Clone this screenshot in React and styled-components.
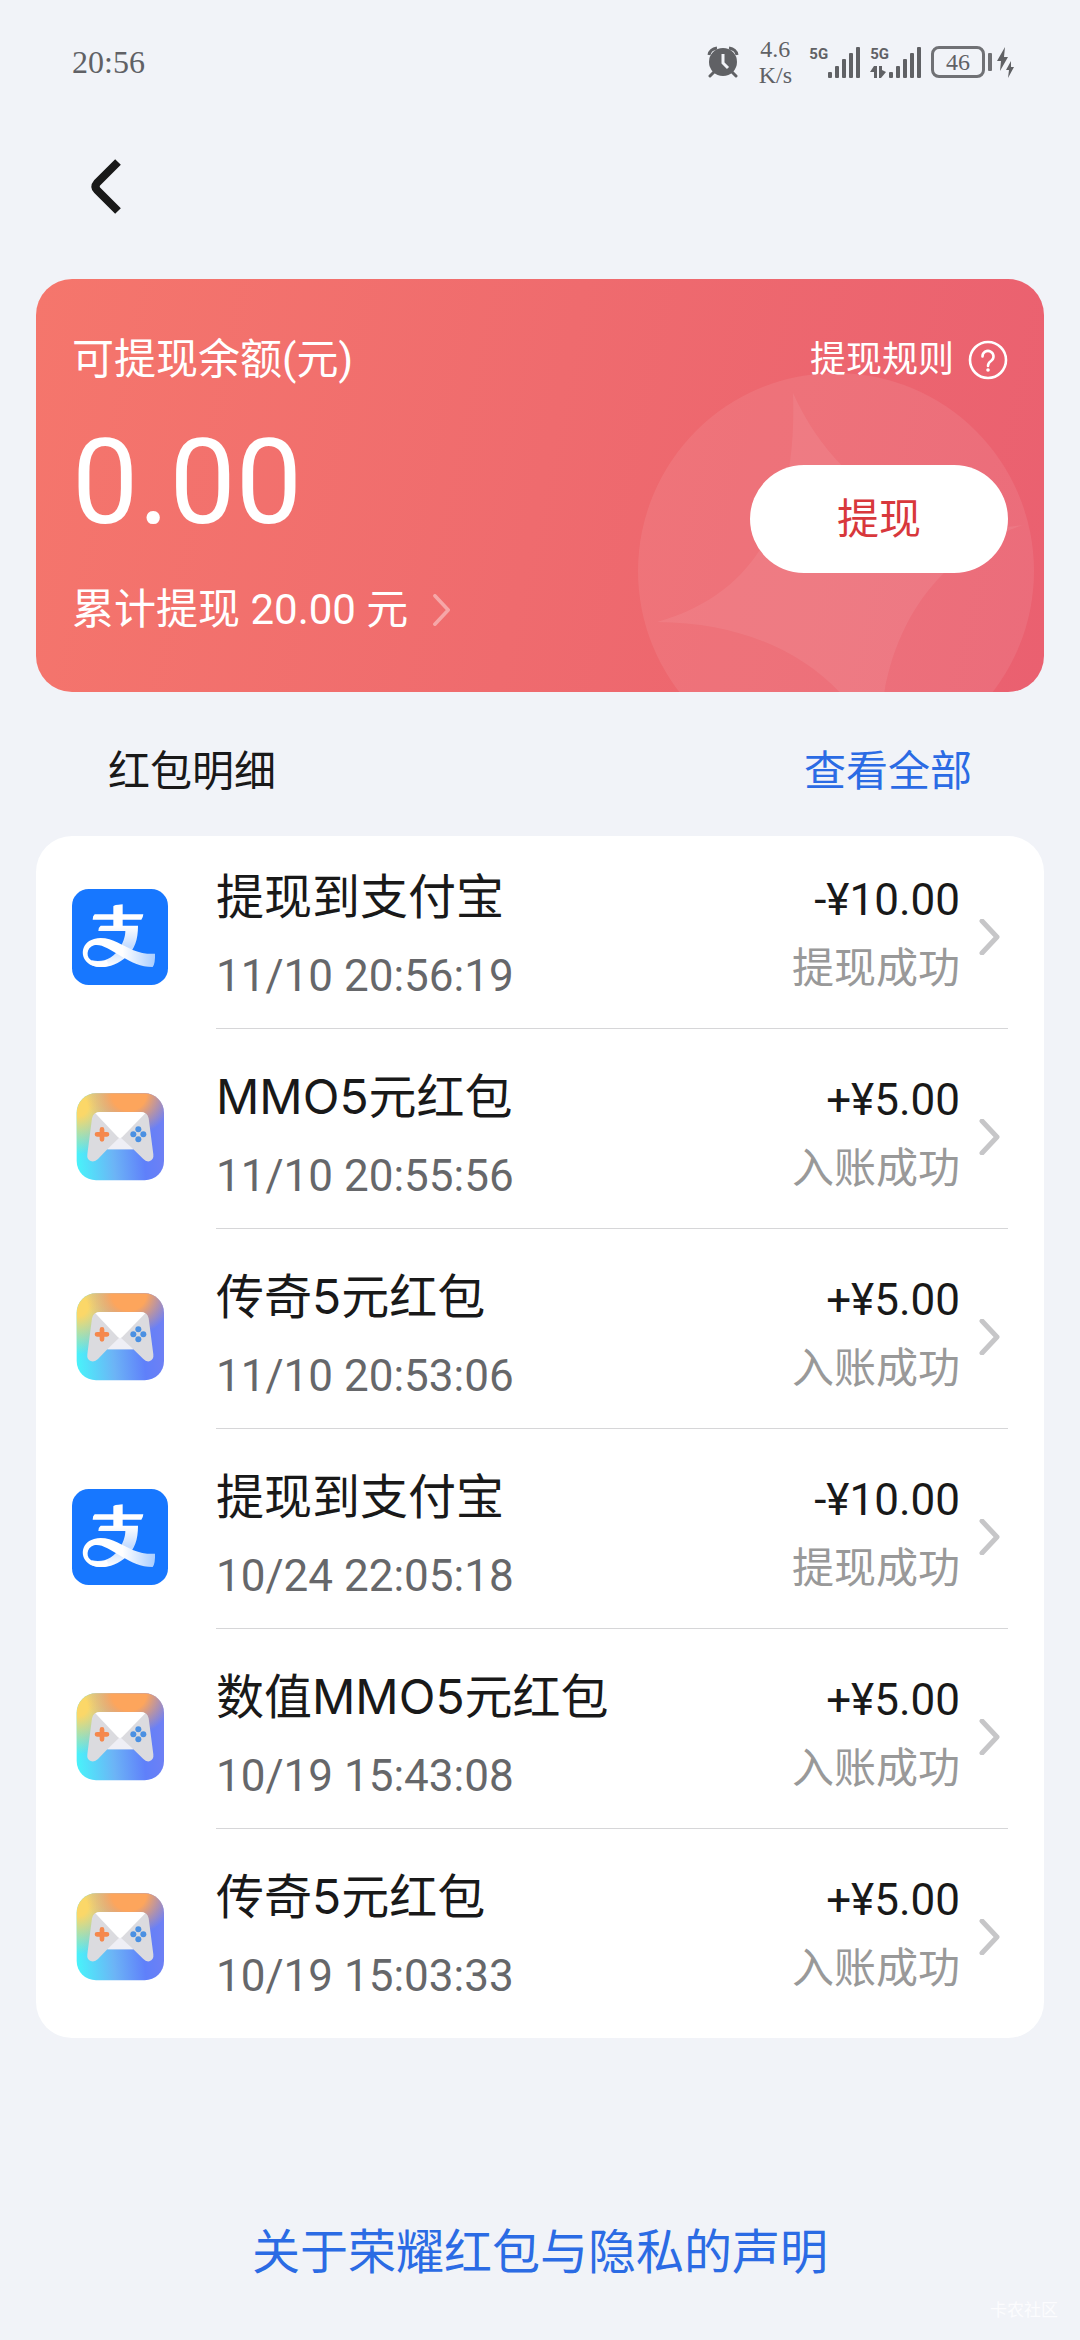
import React from 'react'
import styled, { createGlobalStyle } from 'styled-components'

const GlobalStyle = createGlobalStyle`
  * {
    box-sizing: border-box;
  }
  body {
    margin: 0;
    background-color: #f1f3f8;
    font-family: Roboto, "Noto Sans CJK SC", sans-serif;
    color: #191919;
  }
  svg {
    display: block;
    flex: none;
  }`

const Page = styled.div`
  display: flex;
  flex-direction: column;
  min-height: 100vh;
  position: relative;
  overflow: hidden;`

const StatusBar = styled.div`
  display: flex;
  align-items: center;
  justify-content: space-between;
  height: 124px;
  padding: 0 66px 0 72px;
  color: #606165;
  font-family: "Liberation Serif", serif;`

const Clock = styled.span`
  font-size: 32px;`

const StatusIcons = styled.div`
  display: flex;
  align-items: center;`

const NetSpeed = styled.div`
  width: 40px;
  margin: 0 14px 0 16px;
  font-size: 24px;
  line-height: 26px;
  text-align: center;`

const Signal = styled.div`
  display: flex;
  align-items: flex-end;
  height: 32px;
  margin-right: 10px;`

const SignalLabel = styled.div`
  display: flex;
  flex-direction: column;
  justify-content: space-between;
  height: 32px;
  font: bold 15px/16px Roboto, sans-serif;`

const Battery = styled.div`
  display: flex;
  align-items: center;
  justify-content: center;
  width: 54px;
  height: 32px;
  margin-right: 3px;
  border: 3px solid #707175;
  border-radius: 8px;
  font-size: 24px;
  line-height: 26px;`

const NavBar = styled.nav`
  display: flex;
  align-items: center;
  height: 124px;
  padding: 0 72px;`

const BackButton = styled.button`
  padding: 0;
  border: 0;
  background: none;`

const BalanceCard = styled.section`
  position: relative;
  overflow: hidden;
  margin: 31px 36px 0;
  padding: 51px 36px 52px;
  border-radius: 36px;
  background: linear-gradient(102deg, #f5766c 0%, #ef6b6e 50%, #ea6070 100%);
  color: #fff;`

const Emblem = styled.svg`
  position: absolute;
  right: 9px;
  top: 94px;`

const CardRow = styled.div`
  position: relative;
  display: flex;
  align-items: ${props => props.$top ? 'flex-start' : 'center'};
  justify-content: space-between;
  margin-bottom: ${props => props.$gap || 0}px;`

const CardLabel = styled.h1`
  margin: 0;
  font-size: 42px;
  line-height: 60px;
  font-weight: 400;`

const RulesLink = styled.a`
  display: flex;
  align-items: center;
  gap: 14px;
  color: #fff;
  font-size: 36px;
  line-height: 60px;
  text-decoration: none;`

const Balance = styled.div`
  font-size: 118px;
  line-height: 128px;
  margin-bottom: 33px;`

const TotalLink = styled.a`
  display: flex;
  align-items: center;
  gap: 18px;
  color: #fff;
  font-size: 42px;
  line-height: 60px;
  text-decoration: none;`

const WithdrawButton = styled.button`
  width: 258px;
  height: 108px;
  margin-top: 46px;
  padding: 0 0 8px;
  border: 0;
  border-radius: 54px;
  background-color: #fff;
  color: #d8383c;
  font-family: inherit;
  font-size: 42px;`

const SectionHead = styled.div`
  display: flex;
  justify-content: space-between;
  margin: 50px 108px 34px;
  font-size: 42px;
  line-height: 60px;`

const SectionTitle = styled.h2`
  margin: 0;
  font-size: 42px;
  font-weight: 400;`

const BlueLink = styled.a`
  color: #2b6be4;
  text-decoration: none;`

const List = styled.ul`
  margin: 0 36px;
  padding: 1px 0;
  border-radius: 36px;
  background-color: #fff;
  list-style-type: none;`

const Row = styled.a`
  display: flex;
  gap: 48px;
  padding: 0 36px 8px;
  color: inherit;
  text-decoration: none;`

const RowIcon = styled.div`
  display: flex;
  align-items: center;
  padding-top: 8px;`

const RowBody = styled.div`
  display: flex;
  flex: 1;
  height: 192px;
  border-bottom: 1px solid ${props => props.$last ? 'transparent' : '#d6d6d8'};`

const RowMain = styled.div`
  flex: 1;
  padding-top: 30px;`

const RowTitle = styled.div`
  font-family: Inter, "Noto Sans CJK SC", sans-serif;
  font-size: 48px;
  line-height: 60px;`

const RowTime = styled.div`
  margin-top: 24px;
  color: #66676a;
  font-size: 44px;
  line-height: 50px;`

const RowSide = styled.div`
  margin-right: 12px;
  padding-top: 33px;
  text-align: right;`

const Amount = styled.div`
  font-size: 44px;
  line-height: 60px;`

const Status = styled.div`
  margin-top: 9px;
  color: #999;
  font-size: 42px;
  line-height: 60px;`

const RowArrow = styled.div`
  display: flex;
  align-items: center;
  height: 200px;`

const Footer = styled.footer`
  margin-top: auto;
  padding: 60px 36px 57px;
  font-size: 48px;
  line-height: 60px;
  text-align: center;`

const Watermark = styled.span`
  position: absolute;
  right: 22px;
  bottom: 18px;
  color: #fcfcfe;
  font-size: 17px;
  line-height: 24px;`

const records = [
  { type: 'alipay', title: '提现到支付宝', time: '11/10 20:56:19', amount: '-¥10.00', status: '提现成功' },
  { type: 'game', title: 'MMO5元红包', time: '11/10 20:55:56', amount: '+¥5.00', status: '入账成功' },
  { type: 'game', title: '传奇5元红包', time: '11/10 20:53:06', amount: '+¥5.00', status: '入账成功' },
  { type: 'alipay', title: '提现到支付宝', time: '10/24 22:05:18', amount: '-¥10.00', status: '提现成功' },
  { type: 'game', title: '数值MMO5元红包', time: '10/19 15:43:08', amount: '+¥5.00', status: '入账成功' },
  { type: 'game', title: '传奇5元红包', time: '10/19 15:03:33', amount: '+¥5.00', status: '入账成功' },
]

function AlarmIcon() {
  return (
    <svg width="32" height="32" viewBox="0 0 32 32" fill="none">
      <circle cx="16" cy="16" r="14" fill="#606165" />
      <path d="M2 9Q3 3 10 2M30 9Q29 3 22 2" stroke="#606165" strokeWidth="3" />
      <path d="M7 26L3 30M25 26L29 30" stroke="#606165" strokeWidth="3" strokeLinecap="round" />
      <path d="M16 8V17L21 22" stroke="#f1f3f8" strokeWidth="3" />
    </svg>
  )
}

function SignalBars() {
  return (
    <svg width="32" height="32" viewBox="0 0 32 32" fill="#606165">
      <rect x="0" y="26" width="4" height="6" rx="1" />
      <rect x="7" y="20" width="4" height="12" rx="1" />
      <rect x="14" y="13" width="4" height="19" rx="1" />
      <rect x="21" y="7" width="4" height="25" rx="1" />
      <rect x="28" y="1" width="4" height="31" rx="1" />
    </svg>
  )
}

function DataArrows() {
  return (
    <svg width="16" height="12" viewBox="0 0 16 12" fill="#606165">
      <path d="M4 0H7V12H4V6H0ZM9 0H12V4L16 6L11 12H9Z" />
    </svg>
  )
}

function ChargeIcon() {
  return (
    <svg width="17" height="32" viewBox="0 0 17 32" fill="#606165">
      <path d="M8 1L0 15H4L3 25L11 11H7Z" />
      <path d="M14 15L9 24H12L11 32L17 21H14Z" />
    </svg>
  )
}

function Arrow({ color, width, size }) {
  return (
    <svg width={size} height={size} viewBox="0 0 36 36" fill="none" stroke={color} strokeWidth={width} strokeLinecap="round" strokeLinejoin="round">
      <path d="M10 2L25 18L10 34" />
    </svg>
  )
}

function AlipayIcon() {
  return (
    <svg width="96" height="96" viewBox="0 0 288 288">
      <defs>
        <linearGradient id="tail" x1="0" y1="0" x2="1" y2="0">
          <stop offset="0.55" stopColor="#fff" />
          <stop offset="1" stopColor="#a9cdff" />
        </linearGradient>
        <linearGradient id="fall" x1="0" y1="0" x2="0" y2="1">
          <stop offset="0.35" stopColor="#fff" />
          <stop offset="0.68" stopColor="#c2dbff" />
          <stop offset="1" stopColor="#fff" />
        </linearGradient>
      </defs>
      <rect width="288" height="288" rx="50" fill="#1777ff" />
      <path d="M124 52Q124 48 152 46V76H214Q213 87 208 92H152V110H198C198 152 188 180 166 200C130 236 88 238 62 230L60 214C95 222 126 206 144 176C156 156 160 140 160 126H79Q79 115 86 110H124V92H62Q62 80 68 76H124Z" fill="url(#fall)" />
      <path d="M62 230C22 216 22 162 66 150C110 138 150 170 180 182C205 192 230 196 249 194Q250 224 242 234C205 234 180 220 150 203C110 180 88 164 66 169C42 176 40 208 62 216C76 220 92 219 104 213L110 230Q86 237 62 230Z" fill="url(#tail)" />
    </svg>
  )
}

function GameIcon() {
  return (
    <svg width="96" height="96" viewBox="0 0 288 288">
      <defs>
        <linearGradient id="gameBase" x1="0" y1="0.6" x2="1" y2="0.5">
          <stop offset="0" stopColor="#4af0fa" />
          <stop offset="0.4" stopColor="#6cb4f6" />
          <stop offset="0.75" stopColor="#5f80fa" />
          <stop offset="1" stopColor="#6f80f4" />
        </linearGradient>
        <radialGradient id="gameYellow" cx="0.02" cy="0.15" r="0.55">
          <stop offset="0.2" stopColor="#fbd768" />
          <stop offset="1" stopColor="#fbd768" stopOpacity="0" />
        </radialGradient>
        <radialGradient id="gameOrange" cx="0.6" cy="0" r="0.5">
          <stop offset="0.4" stopColor="#fda55c" />
          <stop offset="1" stopColor="#fda55c" stopOpacity="0" />
        </radialGradient>
      </defs>
      <rect x="14" y="13" width="262" height="261" rx="58" fill="url(#gameBase)" />
      <rect x="14" y="13" width="262" height="261" rx="58" fill="url(#gameYellow)" />
      <rect x="14" y="13" width="262" height="261" rx="58" fill="url(#gameOrange)" />
      <path d="M84 69H206Q226 69 230 88L244 196Q246 212 232 217Q222 219 214 210L184 181H106L78 210Q68 220 56 216Q44 211 46 196L60 88Q64 69 84 69Z" fill="#dbdbdf" />
      <path d="M144 144L184 181H106Z" fill="#efeff5" />
      <path d="M70 73Q76 69 84 69H206Q214 69 220 73L150 145Q144 150 138 145Z" fill="#fff" />
      <path d="M90 121V151M75 136H105" stroke="#f5884c" strokeWidth="14" strokeLinecap="round" />
      <g fill="#4a90e2">
        <circle cx="199" cy="121" r="9" />
        <circle cx="199" cy="151" r="9" />
        <circle cx="184" cy="136" r="9" />
        <circle cx="214" cy="136" r="9" />
      </g>
    </svg>
  )
}

export default function App() {
  return (
    <Page>
      <GlobalStyle />
      <StatusBar>
        <Clock>20:56</Clock>
        <StatusIcons>
          <AlarmIcon />
          <NetSpeed>4.6<br />K/s</NetSpeed>
          <Signal>
            <SignalLabel>5G</SignalLabel>
            <SignalBars />
          </Signal>
          <Signal>
            <SignalLabel>5G<DataArrows /></SignalLabel>
            <SignalBars />
          </Signal>
          <Battery>46</Battery>
          <svg width="9" height="18" viewBox="0 0 9 18">
            <rect width="4" height="18" rx="1" fill="#707175" />
          </svg>
          <ChargeIcon />
        </StatusIcons>
      </StatusBar>

      <NavBar>
        <BackButton aria-label="返回">
          <svg width="72" height="72" viewBox="0 0 72 72" fill="none" stroke="#191919" strokeWidth="8">
            <path d="M46 12L25 33Q22 36.500 25 40L46 61" />
          </svg>
        </BackButton>
      </NavBar>

      <BalanceCard>
        <Emblem width="397" height="397" viewBox="0 0 397 397" fill="#fff">
          <circle cx="198" cy="198" r="198" fillOpacity="0.08" />
          <path d="M155 20C158 110 140 215 19 249C130 250 205 300 242 378C240 290 275 190 385 152C290 165 200 120 155 20Z" fillOpacity="0.07" />
        </Emblem>
        <CardRow $gap={29}>
          <CardLabel>可提现余额(元)</CardLabel>
          <RulesLink href="#">
            提现规则
            <svg width="40" height="40" viewBox="0 0 40 40" fill="none" stroke="#fff" strokeWidth="2.6">
              <circle cx="20" cy="20" r="18" />
              <path d="M14.5 16.5A5.5 5.5 0 1 1 23 21Q20 23 20 26" strokeLinecap="round" />
              <circle cx="20" cy="30" r="1.8" fill="#fff" stroke="none" />
            </svg>
          </RulesLink>
        </CardRow>
        <CardRow $top>
          <div>
            <Balance>0.00</Balance>
            <TotalLink href="#">
              累计提现 20.00 元
              <Arrow color="rgba(255, 255, 255, 0.4)" width="4" size="32" />
            </TotalLink>
          </div>
          <WithdrawButton>提现</WithdrawButton>
        </CardRow>
      </BalanceCard>

      <SectionHead>
        <SectionTitle>红包明细</SectionTitle>
        <BlueLink href="#">查看全部</BlueLink>
      </SectionHead>

      <List>
        {records.map((item, index) => (
          <li key={item.time}>
            <Row href="#">
              <RowIcon>{item.type === 'alipay' ? <AlipayIcon /> : <GameIcon />}</RowIcon>
              <RowBody $last={index === records.length - 1}>
                <RowMain>
                  <RowTitle>{item.title}</RowTitle>
                  <RowTime>{item.time}</RowTime>
                </RowMain>
                <RowSide>
                  <Amount>{item.amount}</Amount>
                  <Status>{item.status}</Status>
                </RowSide>
                <RowArrow><Arrow color="#c6c6c8" width="5" size="36" /></RowArrow>
              </RowBody>
            </Row>
          </li>
        ))}
      </List>

      <Footer>
        <BlueLink href="#">关于荣耀红包与隐私的声明</BlueLink>
      </Footer>
      <Watermark>卡农社区</Watermark>
    </Page>
  )
}
